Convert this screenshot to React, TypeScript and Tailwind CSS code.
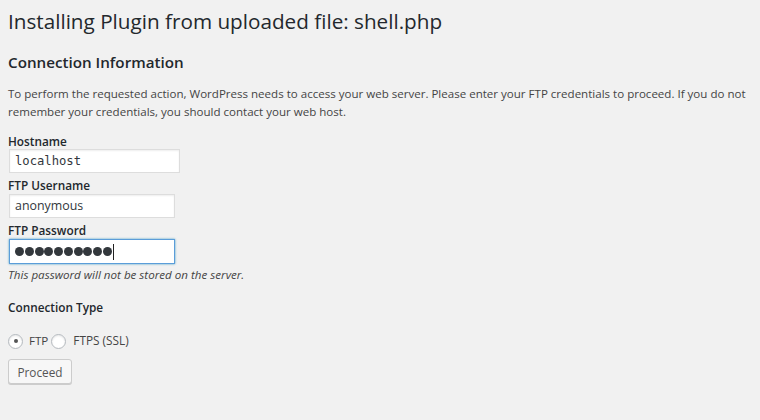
import React from "react";

export default function App() {
  const dots = Array.from({ length: 10 });
  return (
    <div
      className="w-[760px] h-[420px] bg-[#f1f1f1] text-[#444] text-[11.8px] overflow-hidden"
      style={{ fontFamily: '"Open Sans", sans-serif' }}
    >
      <div className="px-[8px] pt-[6px]">
        <h1 className="text-[20.7px] leading-[30px] text-[#23282d] font-normal">
          Installing Plugin from uploaded file: shell.php
        </h1>
        <h2 className="mt-[15px] text-[15.2px] leading-[22px] font-semibold text-[#23282d]">
          Connection Information
        </h2>
        <p className="mt-[12px] text-[11.55px] leading-[18px] text-[#444]">
          To perform the requested action, WordPress needs to access your web server. Please enter your FTP credentials to proceed. If you do not remember your credentials, you should contact your web host.
        </p>

        <div className="mt-[12px] flex flex-col">
          <label className="font-semibold leading-[16px] text-[#23282d]">Hostname</label>
          <div
            className="ml-[1px] w-[171px] h-[24px] bg-white border border-[#ddd] shadow-[inset_0_1px_2px_rgba(0,0,0,0.07)] flex items-center px-[5px] text-[12.2px] text-[#32373c]"
            style={{ fontFamily: '"DejaVu Sans Mono", monospace' }}
          >
            localhost
          </div>

          <label className="mt-[4px] font-semibold leading-[16px] text-[#23282d]">FTP Username</label>
          <div className="ml-[1px] mt-[1px] w-[166px] h-[24px] bg-white border border-[#ddd] shadow-[inset_0_1px_2px_rgba(0,0,0,0.07)] flex items-center px-[5px] text-[12.4px] text-[#32373c]">
            anonymous
          </div>

          <label className="mt-[4px] font-semibold leading-[16px] text-[#23282d]">FTP Password</label>
          <div className="ml-[1px] mt-[1px] w-[166px] h-[25px] bg-white border border-[#5b9dd9] shadow-[0_0_2px_rgba(30,140,190,0.8)] flex items-center pl-[5px]">
            <div className="flex items-center gap-[0.75px]">
              {dots.map((_, i) => (
                <span key={i} className="w-[9px] h-[9px] rounded-full bg-[#32373c]" />
              ))}
            </div>
            <span className="ml-[1px] w-[1px] h-[16px] bg-[#222]" />
          </div>
          <p className="mt-[3px] text-[11.6px] italic leading-[16px]">This password will not be stored on the server.</p>

          <label className="mt-[16px] font-semibold leading-[16px] text-[#23282d]">Connection Type</label>

          <div className="mt-[18px] flex items-center h-[16px]">
            <span className="w-[15px] h-[15px] rounded-full border border-[#b4b9be] bg-white shadow-[inset_0_1px_2px_rgba(0,0,0,0.1)] flex items-center justify-center">
              <span className="w-[4px] h-[4px] rounded-full bg-[#555]" />
            </span>
            <span className="ml-[6px] text-[11.6px]">FTP</span>
            <span className="ml-[3px] w-[15px] h-[15px] rounded-full border border-[#b4b9be] bg-white shadow-[inset_0_1px_2px_rgba(0,0,0,0.1)]" />
            <span className="ml-[7px] text-[11.8px]">FTPS (SSL)</span>
          </div>

          <div className="mt-[10px]">
            <button className="h-[25px] w-[64px] bg-[#f7f7f7] border border-[#ccc] rounded-[3px] shadow-[0_1px_0_#ccc] text-[#555] text-[11.8px] leading-[22px]">
              Proceed
            </button>
          </div>
        </div>
      </div>
    </div>
  );
}
